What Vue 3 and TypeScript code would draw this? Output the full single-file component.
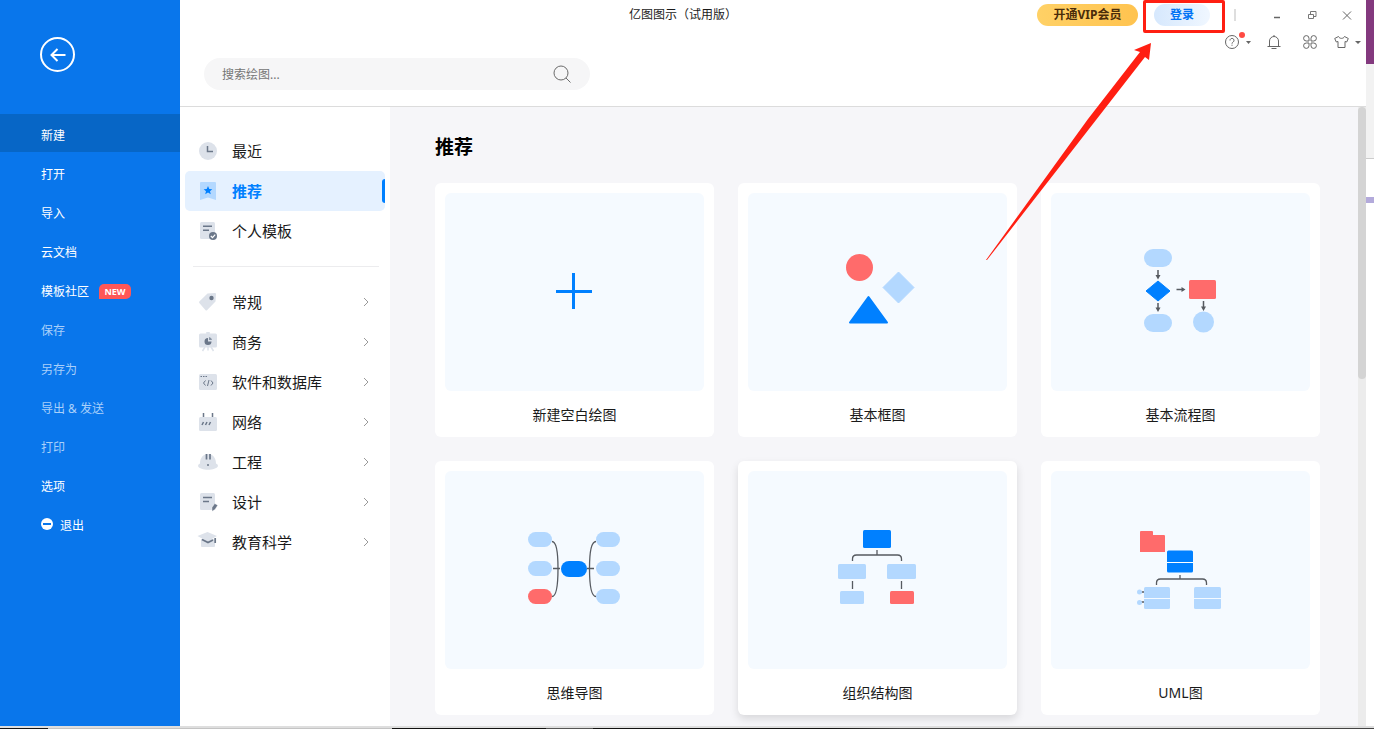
<script setup lang="ts">
import { ref } from 'vue'

interface MenuItem {
  label: string
  disabled?: boolean
  badge?: string
  exit?: boolean
}

interface Category {
  id: string
  label: string
}

const menu: MenuItem[] = [
  { label: '新建' },
  { label: '打开' },
  { label: '导入' },
  { label: '云文档' },
  { label: '模板社区', badge: 'NEW' },
  { label: '保存', disabled: true },
  { label: '另存为', disabled: true },
  { label: '导出 & 发送', disabled: true },
  { label: '打印', disabled: true },
  { label: '选项' },
  { label: '退出', exit: true },
]

const groups: Category[][] = [
  [
    { id: 'recent', label: '最近' },
    { id: 'featured', label: '推荐' },
    { id: 'personal', label: '个人模板' },
  ],
  [
    { id: 'general', label: '常规' },
    { id: 'business', label: '商务' },
    { id: 'software', label: '软件和数据库' },
    { id: 'network', label: '网络' },
    { id: 'engineering', label: '工程' },
    { id: 'design', label: '设计' },
    { id: 'education', label: '教育科学' },
  ],
]

const cards: Category[] = [
  { id: 'blank', label: '新建空白绘图' },
  { id: 'block', label: '基本框图' },
  { id: 'flow', label: '基本流程图' },
  { id: 'mind', label: '思维导图' },
  { id: 'org', label: '组织结构图' },
  { id: 'uml', label: 'UML图' },
]

const activeMenu = ref('新建')
const activeCategory = ref('featured')
const raisedCard = ref('org')
const query = ref('')
</script>

<template>
  <div class="desktop">
    <div class="upper">
      <div class="app">
        <aside class="sidebar">
          <button class="back" aria-label="返回">
            <svg width="35" height="35" viewBox="0 0 35 35" fill="none" stroke="#fff" stroke-width="2">
              <circle cx="17.500" cy="17.500" r="16.500" />
              <path d="M25.500 18H11.500M17.500 12l-6 6 6 6" />
            </svg>
          </button>
          <nav class="menu">
            <button
              v-for="item in menu"
              :key="item.label"
              class="menu-item"
              :class="{ active: item.label === activeMenu }"
              :disabled="item.disabled"
              @click="activeMenu = item.label"
            >
              <svg v-if="item.exit" class="exit" width="12" height="12" viewBox="0 0 12 12">
                <circle cx="6" cy="6" r="6" fill="#fff" />
                <path d="M2 6h8" stroke="#0976eb" stroke-width="2" />
              </svg>
              <span>{{ item.label }}</span>
              <span v-if="item.badge" class="badge">{{ item.badge }}</span>
            </button>
          </nav>
        </aside>

        <div class="main">
          <header class="header">
            <div class="titlebar">
              <h1 class="title">亿图图示（试用版）</h1>
              <div class="account">
                <button class="vip">开通VIP会员</button>
                <div class="login-wrap">
                  <button class="login">登录</button>
                  <span class="marker"></span>
                </div>
                <span class="split"></span>
                <div class="window-buttons">
                  <button class="icon-button" aria-label="最小化">
                    <svg width="12" height="12" viewBox="0 0 12 12"><path d="M3 8.500h6" stroke="#666" stroke-width="1.500" /></svg>
                  </button>
                  <button class="icon-button" aria-label="还原">
                    <svg width="12" height="12" viewBox="0 0 12 12" fill="none" stroke="#777">
                      <path d="M2.500 5.500h5v4h-5zM4.500 5V2.500h5.500v5H8" />
                    </svg>
                  </button>
                  <button class="icon-button" aria-label="关闭">
                    <svg width="12" height="12" viewBox="0 0 12 12"><path d="M2 2.500l8 8M10 2.500l-8 8" stroke="#666" /></svg>
                  </button>
                </div>
              </div>
            </div>

            <div class="tools">
              <button class="icon-button help" aria-label="帮助">
                <svg width="28" height="18" viewBox="0 0 28 18" fill="none" stroke="#666">
                  <circle cx="8" cy="10" r="6.500" />
                  <path d="M6 8.500a2 2 0 1 1 3.200 1.500C8.400 10.600 8 10.800 8 11.700M8 12.700v1.100" />
                  <circle cx="18" cy="3" r="3" fill="#ff4a43" stroke="none" />
                  <path d="M22 9h5l-2.500 3z" fill="#666" stroke="none" />
                </svg>
              </button>
              <button class="icon-button" aria-label="通知">
                <svg width="14" height="14" viewBox="0 0 14 14" fill="none" stroke="#666">
                  <path d="M.500 11.500h13M2.500 11.500V6a4.500 4.500 0 0 1 9 0v5.500M4.500 13.500h5M7 0v1.500" />
                </svg>
              </button>
              <button class="icon-button" aria-label="应用">
                <svg width="14" height="14" viewBox="0 0 14 14" fill="none" stroke="#666">
                  <path d="M6 6H3.300A2.700 2.700 0 1 1 6 3.300zM8 6V3.300A2.700 2.700 0 1 1 10.700 6zM6 8v2.700A2.700 2.700 0 1 1 3.300 8zM8 8h2.700A2.700 2.700 0 1 1 8 10.700z" />
                </svg>
              </button>
              <button class="icon-button theme" aria-label="主题">
                <svg width="28" height="14" viewBox="0 0 28 14" fill="none" stroke="#666">
                  <path d="M4.500 1.500L.700 3.500l1.600 3.500 1.700-.5v6h7v-6l1.700.5 1.600-3.500-3.800-2C9.500 4 5.500 4 4.500 1.500z" />
                  <path d="M21 6h6l-3 3z" fill="#666" stroke="none" />
                </svg>
              </button>
            </div>

            <form class="search" @submit.prevent>
              <input v-model="query" type="text" placeholder="搜索绘图..." aria-label="搜索绘图" />
              <button class="icon-button" aria-label="搜索">
                <svg width="20" height="20" viewBox="0 0 20 20" fill="none" stroke="#6b6b6b">
                  <circle cx="9" cy="9" r="7" />
                  <path d="M14 14l4.500 4.500" />
                </svg>
              </button>
            </form>
          </header>

          <div class="body">
            <nav class="categories">
              <ul v-for="(group, index) in groups" :key="index" class="group">
                <li v-for="item in group" :key="item.id">
                  <button
                    class="category"
                    :class="{ active: item.id === activeCategory }"
                    @click="activeCategory = item.id"
                  >
                    <svg class="category-icon" width="22" height="20" viewBox="0 0 22 20" fill="#dde2ea">
                      <template v-if="item.id === 'recent'">
                        <circle cx="11" cy="10" r="9" />
                        <path d="M10.500 5v5.500H16" fill="none" stroke="#6b7789" stroke-width="1.500" />
                      </template>
                      <template v-else-if="item.id === 'featured'">
                        <path d="M4 1h14q1 0 1 1v17l-8-2.500L3 19V2q0-1 1-1z" fill="#b3d8ff" />
                        <path d="M11 5l1.300 2.900 3 .3-2.300 2 .8 3L11 11.600l-2.800 1.600.8-3-2.300-2 3-.3z" fill="#0080ff" />
                      </template>
                      <template v-else-if="item.id === 'personal'">
                        <rect x="3" y="1" width="15" height="17" rx="1.500" />
                        <path d="M6 5.200h9M6 9.200h6" stroke="#6b7789" stroke-width="1.400" />
                        <circle cx="16" cy="15" r="4" fill="#6b7789" />
                        <path d="M13.800 15l1.700 1.600 2.700-2.900" fill="none" stroke="#fff" stroke-width="1.200" />
                      </template>
                      <template v-else-if="item.id === 'general'">
                        <path d="M10.500 1.500L18 1q1 0 1 1l-.500 7.500-8.500 8.700q-.700.500-1.400 0L2.300 11q-.500-.700 0-1.400z" />
                        <circle cx="14.500" cy="6" r="2.200" fill="#6b7789" />
                      </template>
                      <template v-else-if="item.id === 'business'">
                        <path d="M10 .500h2v2h-2zM8 15l-2.500 4M14 15l2.500 4M11 15v3.500" stroke="#dde2ea" stroke-width="1.500" />
                        <rect x="2" y="1.500" width="18" height="14" rx="1.500" />
                        <path d="M11 6v3.500h3.500A3.500 3.500 0 1 1 11 6z" fill="#6b7789" />
                        <path d="M12 5a3.500 3.500 0 0 1 3 3h-3z" fill="#8995a6" />
                      </template>
                      <template v-else-if="item.id === 'software'">
                        <rect x="2" y="2" width="18" height="16" rx="1.500" />
                        <path d="M3.500 4.500h1.500M6 4.500h1.500M8.500 4.500H10" stroke="#6b7789" />
                        <path d="M8.500 8.500L6.500 11l2 2.500M14 8.500l2 2.500-2 2.500M12 8l-1.500 6" fill="none" stroke="#6b7789" />
                      </template>
                      <template v-else-if="item.id === 'network'">
                        <rect x="2" y="5" width="18" height="14" rx="1.500" />
                        <path d="M6.500 1v4M15.500 1v4M6.500 10L5 13M10 10l-1.500 3M13.500 10L12 13" stroke="#6b7789" stroke-width="1.500" />
                      </template>
                      <template v-else-if="item.id === 'engineering'">
                        <path d="M3 11.500C3 5 7 2 11 2s8 3 8 9.500q2 .5 2 2.500c-2 5-18 5-20 0q0-2 2-2.500z" />
                        <path d="M9.500 2v5.500M13 2v5.500" stroke="#6b7789" stroke-width="1.700" />
                        <circle cx="11" cy="13" r="1" fill="#6b7789" />
                      </template>
                      <template v-else-if="item.id === 'design'">
                        <rect x="3" y="1" width="15" height="17" rx="1.500" />
                        <path d="M6 5.500h9M6 9.500h6" stroke="#6b7789" stroke-width="1.400" />
                        <path d="M15 15.500l2.700-4 3 1.800-2.700 4.200-3 1.700zM18.500 10.300l2.700 1.700" fill="#6b7789" stroke="#fff" stroke-width=".4" />
                      </template>
                      <template v-else>
                        <path d="M4 7h14v7q0 1-1 1H5q-1 0-1-1z" />
                        <path d="M.500 4L10.500 0l9.500 4-9.500 5.500z" />
                        <path d="M5 7.500l6 3 5-2.500M18.200 6v5" fill="none" stroke="#6b7789" stroke-width="1.700" />
                      </template>
                    </svg>
                    <span>{{ item.label }}</span>
                    <svg v-if="index === 1" class="chevron" width="8" height="10" viewBox="0 0 8 10" fill="none" stroke="#999">
                      <path d="M2 1l4 4-4 4" />
                    </svg>
                  </button>
                </li>
              </ul>
            </nav>

            <main class="content">
              <h2>推荐</h2>
              <div class="cards">
                <button v-for="card in cards" :key="card.id" class="card" :class="{ raised: card.id === raisedCard }">
                  <span class="preview">
                    <svg width="119" height="100" viewBox="1 0 119 100" fill="#b3d8ff">
                      <path v-if="card.id === 'blank'" d="M42 49.500h36M59.500 31v36" stroke="#0080ff" stroke-width="3" />
                      <template v-else-if="card.id === 'block'">
                        <circle cx="42.500" cy="25.500" r="13.500" fill="#ff6b6b" />
                        <path d="M81.500 30l15.500 15.500L81.500 61 66 45.500z" stroke="#b3d8ff" stroke-linejoin="round" />
                        <path d="M51.500 55L33 80.500h37z" fill="#0080ff" stroke="#0080ff" stroke-width="2" stroke-linejoin="round" />
                      </template>
                      <template v-else-if="card.id === 'flow'">
                        <rect x="24" y="7" width="28" height="18" rx="9" />
                        <rect x="24" y="72" width="28" height="18" rx="9" />
                        <path d="M38 39l12 10-12 10-12-10z" fill="#0080ff" stroke="#0080ff" stroke-linejoin="round" />
                        <rect x="69" y="38" width="27" height="19" rx="1.500" fill="#ff6b6b" />
                        <circle cx="83.500" cy="80" r="10.500" />
                        <path d="M38 28v6M38 61v6M56.500 47.500H63M83.500 59v7" stroke="#565a60" stroke-width="1.500" />
                        <path d="M35.500 33h5L38 37.500zM35.500 65.500h5L38 70zM61.500 45v5l4-2.500zM81 64.500h5L83.500 69z" fill="#565a60" />
                      </template>
                      <template v-else-if="card.id === 'mind'">
                        <path d="M38 21.500c5 0 6 12 6 27s-1 28-6 28M39 48.500h7M82 21.500c-5 0-6.500 12-6.500 27s1.500 28 6.500 28M73 48.500h7" fill="none" stroke="#565a60" stroke-width="1.300" />
                        <rect x="14" y="12" width="24" height="15" rx="7.500" />
                        <rect x="14" y="41" width="24" height="15" rx="7.500" />
                        <rect x="14" y="69" width="24" height="15" rx="7.500" fill="#ff6b6b" />
                        <rect x="82" y="12" width="24" height="15" rx="7.500" />
                        <rect x="82" y="41" width="24" height="15" rx="7.500" />
                        <rect x="82" y="69" width="24" height="15" rx="7.500" />
                        <rect x="47" y="41" width="26" height="16" rx="8" fill="#0080ff" />
                      </template>
                      <template v-else-if="card.id === 'org'">
                        <rect x="46" y="10" width="28" height="18" rx="1.500" fill="#0080ff" />
                        <path d="M60 30v5M35.500 41v-2q0-4 4-4h41q4 0 4 4v2M35.500 61v8M84.500 61v8" fill="none" stroke="#565a60" stroke-width="1.300" />
                        <rect x="21" y="44" width="28" height="15" rx="1.500" />
                        <rect x="70" y="44" width="29" height="15" rx="1.500" />
                        <rect x="23" y="71" width="24" height="13" rx="1.500" />
                        <rect x="73" y="71" width="24" height="13" rx="1.500" fill="#ff6b6b" />
                      </template>
                      <template v-else>
                        <path d="M20 11h12q1 0 1 1v3h11q1 0 1 1v16H20V12q0-1 1-1z" fill="#ff6b6b" />
                        <rect x="47" y="30.500" width="26" height="22" rx="1.500" fill="#0080ff" />
                        <path d="M47 42.500h26" stroke="#fff" />
                        <path d="M60 55v4M36.500 65v-2q0-4 4-4h42q4 0 4 4v2M20 72h5M20 82h5" fill="none" stroke="#565a60" stroke-width="1.300" />
                        <rect x="24" y="67" width="26" height="22" rx="1.500" />
                        <rect x="74" y="67" width="27" height="22" rx="1.500" />
                        <path d="M24 78.500h26M74 78.500h27" stroke="#f5faff" />
                        <circle cx="19.500" cy="72" r="2.500" />
                        <circle cx="19.500" cy="82.500" r="2.500" />
                      </template>
                    </svg>
                  </span>
                  <span class="card-label">{{ card.label }}</span>
                </button>
              </div>
            </main>
            <div class="scrollbar"><div class="thumb"></div></div>
          </div>
        </div>

        <svg class="arrow" width="165" height="217" viewBox="0 0 165 217">
          <path d="M0 217L102 76l52-67-6-2 17-7-2 17-4-3-49 63L1 217z" fill="#ff1f12" />
        </svg>
      </div>

      <div class="behind">
        <div class="behind-purple"></div>
        <div class="behind-gray"></div>
        <div class="behind-lilac"></div>
      </div>
    </div>
    <div class="taskbar"></div>
  </div>
</template>

<style>
body {
  margin: 0;
}
</style>

<style scoped>
* {
  box-sizing: border-box;
}

.desktop {
  display: flex;
  flex-direction: column;
  height: 100vh;
  overflow: hidden;
  background: #fff;
  color: #1a1a1a;
  font-family: "Noto Sans", "Noto Sans CJK SC", sans-serif;
  font-size: 12px;
}

button {
  padding: 0;
  border: 0;
  background: none;
  color: inherit;
  font: inherit;
  cursor: pointer;
}

svg {
  display: block;
  flex: none;
}

.upper {
  display: flex;
  flex: 1;
  min-height: 0;
}

.app {
  position: relative;
  display: flex;
  flex: 1;
  min-width: 0;
}

.sidebar {
  flex: none;
  width: 180px;
  background: #0976eb;
  color: #fff;
}

.back {
  display: block;
  margin: 37px 0 42px 40px;
}

.menu {
  display: flex;
  flex-direction: column;
  gap: 1px;
}

.menu-item {
  display: flex;
  align-items: center;
  height: 38px;
  padding: 6px 0 0 41px;
  line-height: 16px;
  text-align: left;
}

.menu-item.active {
  background: #0766c6;
}

.menu-item:disabled {
  color: #a9d0fa;
  cursor: default;
}

.exit {
  margin: 0 7px 4px 0;
}

.badge {
  width: 32px;
  margin: 0 0 2px 10px;
  border-radius: 5px 5px 5px 0;
  background: #ff5757;
  font-size: 9px;
  font-weight: 700;
  line-height: 15px;
  text-align: center;
}

.main {
  display: flex;
  flex: 1;
  flex-direction: column;
  min-width: 0;
}

.header {
  flex: none;
  height: 107px;
  border-bottom: 1px solid #dcdcdc;
}

.titlebar {
  display: grid;
  grid-template-columns: 1fr auto 1fr;
  align-items: center;
  height: 30px;
  margin-left: -180px;
}

.title {
  grid-column: 2;
  margin: 0;
  font-size: 12px;
  font-weight: 400;
  line-height: 16px;
}

.account {
  display: flex;
  align-items: center;
  justify-self: end;
  padding-right: 13px;
}

.vip,
.login {
  height: 22px;
  border-radius: 11px;
  font-weight: 700;
  line-height: 22px;
}

.vip {
  width: 101px;
  background: linear-gradient(90deg, #ffd166, #ffc34f);
  color: #4a2c0a;
}

.login-wrap {
  position: relative;
  margin-left: 16px;
}

.login {
  display: block;
  width: 56px;
  background: linear-gradient(90deg, #d6e8fd, #f0f7ff);
  color: #0073f5;
}

.marker {
  position: absolute;
  inset: -4px -15px -7px -11px;
  border: 3px solid #ff1f12;
  border-radius: 2px;
  pointer-events: none;
}

.split {
  width: 2px;
  height: 12px;
  margin-left: 24px;
  background: #dedede;
}

.window-buttons {
  display: flex;
  gap: 23px;
  margin-left: 35px;
}

.tools {
  display: flex;
  align-items: center;
  justify-content: flex-end;
  gap: 22px;
  height: 24px;
  padding-right: 4px;
}

.help {
  margin: -2px -7px 0 0;
}

.theme {
  margin-left: -5px;
}

.search {
  display: flex;
  align-items: center;
  width: 386px;
  height: 32px;
  margin: 4px 0 0 24px;
  padding: 0 18px;
  border-radius: 16px;
  background: #f6f6f7;
}

.search input {
  flex: 1;
  min-width: 0;
  padding: 0;
  border: 0;
  outline: 0;
  background: none;
  font: inherit;
}

.search input::placeholder {
  color: #757575;
}

.body {
  display: flex;
  flex: 1;
  min-height: 0;
}

.categories {
  flex: none;
  width: 210px;
  padding: 24px 5px;
}

.group {
  margin: 0;
  padding: 0;
  list-style: none;
}

.group + .group::before {
  display: block;
  height: 1px;
  margin: 15px 6px 15px 8px;
  background: #ececee;
  content: "";
}

.category {
  position: relative;
  display: flex;
  align-items: center;
  width: 100%;
  height: 40px;
  padding: 0 15px 0 12px;
  border-radius: 5px;
  font-size: 15px;
  line-height: 20px;
}

.category.active {
  overflow: hidden;
  background: #e5f1ff;
  color: #0080ff;
  font-weight: 700;
}

.category.active::after {
  position: absolute;
  top: 8px;
  right: 0;
  width: 3px;
  height: 24px;
  border-radius: 3px 0 0 3px;
  background: #0080ff;
  content: "";
}

.category-icon {
  margin-right: 13px;
}

.chevron {
  margin-left: auto;
}

.content {
  flex: 1;
  min-width: 0;
  padding: 26px 38px 0 45px;
  overflow: hidden;
  background: #f6f6f9;
}

h2 {
  margin: 0 0 22px;
  color: #000;
  font-size: 19px;
  font-weight: 700;
  line-height: 28px;
}

.cards {
  display: grid;
  grid-template-columns: repeat(3, 1fr);
  gap: 24px;
}

.card {
  display: flex;
  flex-direction: column;
  padding: 10px 10px 0;
  border-radius: 6px;
  background: #fff;
}

.card.raised {
  box-shadow: 0 4px 8px rgba(0, 0, 0, 0.12);
}

.preview {
  display: flex;
  align-items: center;
  justify-content: center;
  width: 100%;
  height: 198px;
  border-radius: 6px;
  background: #f5faff;
}

.card-label {
  width: 100%;
  padding: 14px 0 12px;
  font-size: 14px;
  line-height: 20px;
}

.scrollbar {
  flex: none;
  width: 8px;
  background: #ececec;
}

.thumb {
  height: 44%;
  border-radius: 4px;
  background: #d4d4d4;
}

.arrow {
  position: absolute;
  top: 43px;
  right: 215px;
  pointer-events: none;
}

.behind {
  display: flex;
  flex: none;
  flex-direction: column;
  width: 8px;
}

.behind-purple {
  height: 64px;
  background: #83397e;
}

.behind-gray {
  height: 95px;
  border-bottom: 1px solid #ccc;
  background: #f2f2f2;
}

.behind-lilac {
  height: 6px;
  margin-top: 38px;
  background: #b3aadb;
}

.taskbar {
  flex: none;
  height: 3px;
  border-top: 2px solid #dedede;
  background: linear-gradient(90deg, #161616 0 48px, #c4c4c4 48px 392px, #111 392px 546px, #555 546px 593px, #111 593px 830px, #444 900px);
}
</style>
